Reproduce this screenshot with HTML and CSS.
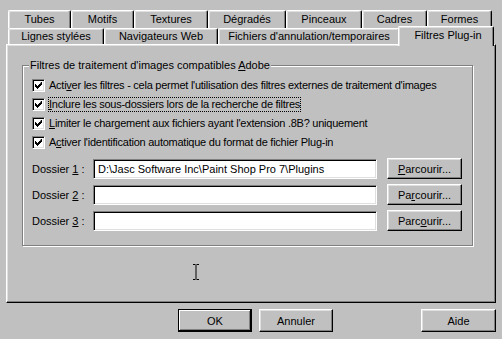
FILE: index.html
```html
<!DOCTYPE html>
<html lang="fr">
<head>
<meta charset="utf-8">
<title>Préférences de fichiers</title>
<link rel="stylesheet" href="styles.css">
</head>
<body>
<div class="dialog">
  <div class="tabstrip">
    <div class="tabrow back">
      <div class="tab t-tubes">Tubes</div>
      <div class="tab t-motifs">Motifs</div>
      <div class="tab t-textures">Textures</div>
      <div class="tab t-degrades">Dégradés</div>
      <div class="tab t-pinceaux">Pinceaux</div>
      <div class="tab t-cadres">Cadres</div>
      <div class="tab t-formes">Formes</div>
    </div>
    <div class="tabrow front">
      <div class="tab t-lignes">Lignes stylées</div>
      <div class="tab t-nav">Navigateurs Web</div>
      <div class="tab t-fichiers">Fichiers d'annulation/temporaires</div>
      <div class="tab t-filtres selected">Filtres Plug-in</div>
    </div>
  </div>
  <div class="panel">
    <div class="group">
      <span class="legend">Filtres de traitement d'images compatibles <u>A</u>dobe</span>
      <div class="checks">
        <div class="check"><span class="box"><svg viewBox="0 0 7 7" width="7" height="7"><path d="M6 0h1v3h-1v1h-1v1h-1v1h-1v1h-1v-1h-1v-1h-1v-3h1v1h1v1h1v-1h1v-1h1z" fill="#000"/></svg></span><span class="ctext">Acti<u>v</u>er les filtres - cela permet l'utilisation des filtres externes de traitement d'images</span></div>
        <div class="check"><span class="box"><svg viewBox="0 0 7 7" width="7" height="7"><path d="M6 0h1v3h-1v1h-1v1h-1v1h-1v1h-1v-1h-1v-1h-1v-3h1v1h1v1h1v-1h1v-1h1z" fill="#000"/></svg></span><span class="ctext focus"><u>I</u>nclure les sous-dossiers lors de la recherche de filtres</span></div>
        <div class="check"><span class="box"><svg viewBox="0 0 7 7" width="7" height="7"><path d="M6 0h1v3h-1v1h-1v1h-1v1h-1v1h-1v-1h-1v-1h-1v-3h1v1h1v1h1v-1h1v-1h1z" fill="#000"/></svg></span><span class="ctext"><u>L</u>imiter le chargement aux fichiers ayant l'extension .8B? uniquement</span></div>
        <div class="check"><span class="box"><svg viewBox="0 0 7 7" width="7" height="7"><path d="M6 0h1v3h-1v1h-1v1h-1v1h-1v1h-1v-1h-1v-1h-1v-3h1v1h1v1h1v-1h1v-1h1z" fill="#000"/></svg></span><span class="ctext">A<u>c</u>tiver l'identification automatique du format de fichier Plug-in</span></div>
      </div>
      <div class="folders">
        <div class="folder">
          <span class="flabel">Dossier <u>1</u> :</span>
          <span class="field">D:\Jasc Software Inc\Paint Shop Pro 7\Plugins</span>
          <span class="btn browse"><u>P</u>arcourir...</span>
        </div>
        <div class="folder">
          <span class="flabel">Dossier <u>2</u> :</span>
          <span class="field"></span>
          <span class="btn browse">Pa<u>r</u>courir...</span>
        </div>
        <div class="folder">
          <span class="flabel">Dossier <u>3</u> :</span>
          <span class="field"></span>
          <span class="btn browse">Parc<u>o</u>urir...</span>
        </div>
      </div>
    </div>
    <svg class="ibeam" viewBox="0 0 8 16" width="8" height="16"><path d="M1 0.5h2.5M4.5 0.5h2.5M4 1v14M1 15.5h2.5M4.5 15.5h2.5" stroke="#000" stroke-width="1" fill="none"/></svg>
  </div>
  <div class="actions">
    <span class="btn default">OK</span>
    <span class="btn">Annuler</span>
    <span class="btn help">Aide</span>
  </div>
</div>
</body>
</html>
```
FILE: styles.css
```css
* { box-sizing: border-box; }
html, body {
  margin: 0;
  padding: 0;
  background: #c0c0c0;
}
body {
  font-family: "Liberation Sans", Arial, sans-serif;
  font-size: 11px;
  color: #000;
  width: 502px;
  height: 339px;
  overflow: hidden;
}
u { text-decoration: underline; text-underline-offset: 1px; }

.dialog {
  padding: 0 6px 0 6px;
}

/* Tabs */
.tabstrip {
  padding-top: 10px;
  padding-left: 2px;
}
.tabrow {
  display: flex;
}
.tabrow.back { height: 18px; }
.tabrow.front { height: 16px; }
.tab {
  flex: none;
  display: flex;
  justify-content: center;
  padding-top: 2px;
  background: #c0c0c0;
  border-top: 1px solid #fff;
  border-left: 1px solid #fff;
  border-right: 1px solid #000;
  border-radius: 2px 2px 0 0;
  box-shadow: inset -1px 0 0 #808080, inset 1px 1px 0 #dfdfdf;
  white-space: nowrap;
}
.front .tab { padding-top: 1px; }
.t-tubes { width: 63px; }
.t-motifs { width: 63px; }
.t-textures { width: 74px; }
.t-degrades { width: 78px; }
.t-pinceaux { width: 76px; }
.t-cadres { width: 65px; }
.t-formes { width: 65px; }
.t-lignes { width: 96px; }
.t-nav { width: 114px; }
.t-fichiers { width: 182px; }
.tab.selected {
  width: 96px;
  height: 20px;
  margin: -2px 0 0 -2px;
  position: relative;
  z-index: 1;
  padding-top: 2px;
  padding-left: 4px;
}

/* Panel */
.panel {
  position: relative;
  height: 259px;
  border-top: 1px solid #fff;
  border-left: 1px solid #fff;
  border-right: 1px solid #000;
  border-bottom: 1px solid #000;
  box-shadow: inset -1px -1px 0 #808080, inset 1px 1px 0 #dfdfdf;
  padding: 20px 0 0 15px;
}

.group {
  position: relative;
  width: 451px;
  height: 181px;
  border: 1px solid #808080;
  box-shadow: 1px 1px 0 #fff, inset 1px 1px 0 #fff;
  padding: 10px 0 0 9px;
}
.legend {
  position: absolute;
  top: -8px;
  left: 6px;
  padding: 0 1px;
  background: #c0c0c0;
  line-height: 14px;
  white-space: nowrap;
}

.checks {
  display: flex;
  flex-direction: column;
}
.check {
  height: 19px;
  display: flex;
  align-items: center;
  gap: 4px;
  white-space: nowrap;
}
.box {
  flex: none;
  width: 13px;
  height: 13px;
  background: #fff;
  border-top: 1px solid #808080;
  border-left: 1px solid #808080;
  border-right: 1px solid #fff;
  border-bottom: 1px solid #fff;
  box-shadow: inset 1px 1px 0 #000, inset -1px -1px 0 #dfdfdf;
  display: flex;
  align-items: center;
  justify-content: center;
}
.box svg { display: block; }
.ctext {
  line-height: 13px;
  letter-spacing: -0.25px;
}
.ctext.focus {
  outline: 1px dotted #000;
  outline-offset: 0;
}

.folders {
  margin-top: 6px;
  display: flex;
  flex-direction: column;
  gap: 5px;
}
.folder {
  display: flex;
  align-items: center;
  height: 21px;
}
.flabel {
  width: 61px;
  flex: none;
  white-space: nowrap;
}
.field {
  width: 284px;
  height: 20px;
  background: #fff;
  border-top: 1px solid #808080;
  border-left: 1px solid #808080;
  border-right: 1px solid #fff;
  border-bottom: 1px solid #fff;
  box-shadow: inset 1px 1px 0 #000, inset -1px -1px 0 #dfdfdf;
  padding: 3px 0 0 4px;
  white-space: nowrap;
  overflow: hidden;
}

.btn {
  display: flex;
  align-items: center;
  justify-content: center;
  background: #c0c0c0;
  border-top: 1px solid #fff;
  border-left: 1px solid #fff;
  border-right: 1px solid #000;
  border-bottom: 1px solid #000;
  box-shadow: inset -1px -1px 0 #808080, inset 1px 1px 0 #dfdfdf;
  white-space: nowrap;
}
.browse {
  width: 75px;
  height: 21px;
  margin-left: 10px;
}

.ibeam {
  position: absolute;
  left: 185px;
  top: 219px;
}

.actions {
  display: flex;
  padding-top: 6px;
  padding-left: 172px;
}
.actions .btn {
  width: 74px;
  height: 23px;
}
.actions .btn + .btn { margin-left: 7px; }
.btn.default {
  border: 1px solid #000;
  box-shadow: inset -1px -1px 0 #000, inset 1px 1px 0 #fff, inset -2px -2px 0 #808080;
}
.actions .btn.help {
  margin-left: auto;
  width: 75px;
}
```
